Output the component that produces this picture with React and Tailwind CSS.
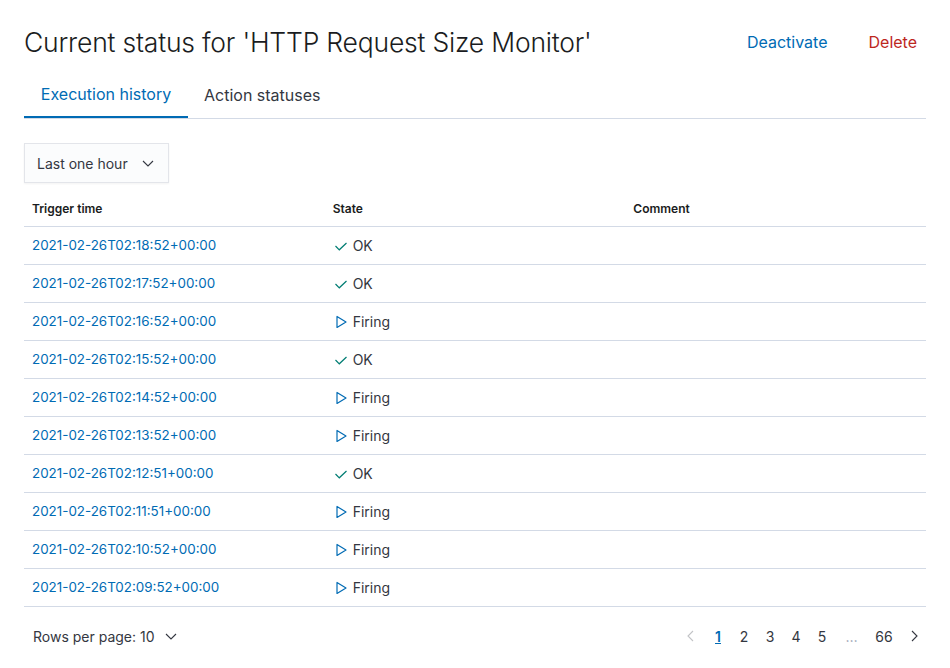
import React from "react";

const rows = [
  ["2021-02-26T02:18:52+00:00", "OK"],
  ["2021-02-26T02:17:52+00:00", "OK"],
  ["2021-02-26T02:16:52+00:00", "Firing"],
  ["2021-02-26T02:15:52+00:00", "OK"],
  ["2021-02-26T02:14:52+00:00", "Firing"],
  ["2021-02-26T02:13:52+00:00", "Firing"],
  ["2021-02-26T02:12:51+00:00", "OK"],
  ["2021-02-26T02:11:51+00:00", "Firing"],
  ["2021-02-26T02:10:52+00:00", "Firing"],
  ["2021-02-26T02:09:52+00:00", "Firing"],
];

function Check() {
  return (
    <svg width="16" height="16" viewBox="0 0 16 16" fill="none">
      <path d="M2.5 8l3.8 3.8L13.5 5" stroke="#017d73" strokeWidth="1.2" />
    </svg>
  );
}

function Play() {
  return (
    <svg width="16" height="16" viewBox="0 0 16 16" fill="none">
      <path d="M4 2.5v11l9-5.5z" stroke="#006bb4" strokeWidth="1.2" strokeLinejoin="round" />
    </svg>
  );
}

function Chevron({ className = "" }) {
  return (
    <svg className={className} width="16" height="16" viewBox="0 0 16 16" fill="none">
      <path d="M3 6l5 5 5-5" stroke="#343741" strokeWidth="1.1" />
    </svg>
  );
}

export default function App() {
  return (
    <div
      className="min-h-[668px] w-[950px] bg-white px-6 text-[#343741]"
      style={{ fontFamily: "Inter, 'Noto Sans', sans-serif" }}
    >
      <div className="flex items-center justify-between pt-[22px] h-[62px]">
        <h1 className="text-[26.5px] font-light leading-[36px] text-[#1a1c21] tracking-[-0.2px]">
          Current status for 'HTTP Request Size Monitor'
        </h1>
        <div className="flex items-center gap-[41px] pr-[9px] text-[16px]">
          <span className="text-[#006bb4]">Deactivate</span>
          <span className="text-[#bd271e]">Delete</span>
        </div>
      </div>
      <div className="mt-[10px] flex border-b border-[#d3dae6] text-[16px]">
        <div className="h-[46px] w-[164px] flex items-center justify-center text-[#006bb4] border-b-2 border-[#006bb4] -mb-px">
          Execution history
        </div>
        <div className="h-[46px] flex items-center pl-[16px] pr-4">Action statuses</div>
      </div>
      <div className="mt-[24px] flex">
        <div className="h-[40px] w-[145px] flex items-center justify-between pl-3 pr-[12px] bg-[#fbfcfd] border border-[#e3e5ea] text-[14px] shadow-[0_1px_2px_rgba(0,0,0,0.05)]">
          <span>Last one hour</span>
          <Chevron />
        </div>
      </div>
      <div className="mt-[8px]">
        <div className="grid grid-cols-3 h-[36px] items-center border-b border-[#d3dae6] text-[12px] font-semibold text-[#1a1c21]">
          <div className="px-2">Trigger time</div>
          <div className="px-2">State</div>
          <div className="px-2">Comment</div>
        </div>
        {rows.map(([t, s], i) => (
          <div key={i} className="grid grid-cols-3 h-[38px] items-center border-b border-[#d3dae6] text-[14px]">
            <div className="px-2 text-[13.4px] text-[#006bb4]">{t}</div>
            <div className="px-2 flex items-center gap-[4px]">
              {s === "OK" ? <Check /> : <Play />}
              <span>{s}</span>
            </div>
            <div className="px-2"></div>
          </div>
        ))}
      </div>
      <div className="flex items-center justify-between h-[58px] text-[14px]">
        <div className="flex items-center gap-[8px] pl-[9px]">
          <span>Rows per page: 10</span>
          <Chevron />
        </div>
        <div className="flex items-center">
          <svg width="16" height="16" viewBox="0 0 16 16" fill="none" className="mr-[6px]">
            <path d="M10 3L5 8l5 5" stroke="#c2c3c6" strokeWidth="1.1" />
          </svg>
          <span className="w-[26px] text-center text-[#006bb4] font-semibold underline">1</span>
          <span className="w-[26px] text-center">2</span>
          <span className="w-[26px] text-center">3</span>
          <span className="w-[26px] text-center">4</span>
          <span className="w-[26px] text-center">5</span>
          <span className="w-[33px] text-center text-[#98a2b3]">…</span>
          <span className="w-[32px] text-center">66</span>
          <svg width="16" height="16" viewBox="0 0 16 16" fill="none" className="ml-[6px] mr-[4px]">
            <path d="M6 3l5 5-5 5" stroke="#343741" strokeWidth="1.1" />
          </svg>
        </div>
      </div>
    </div>
  );
}
